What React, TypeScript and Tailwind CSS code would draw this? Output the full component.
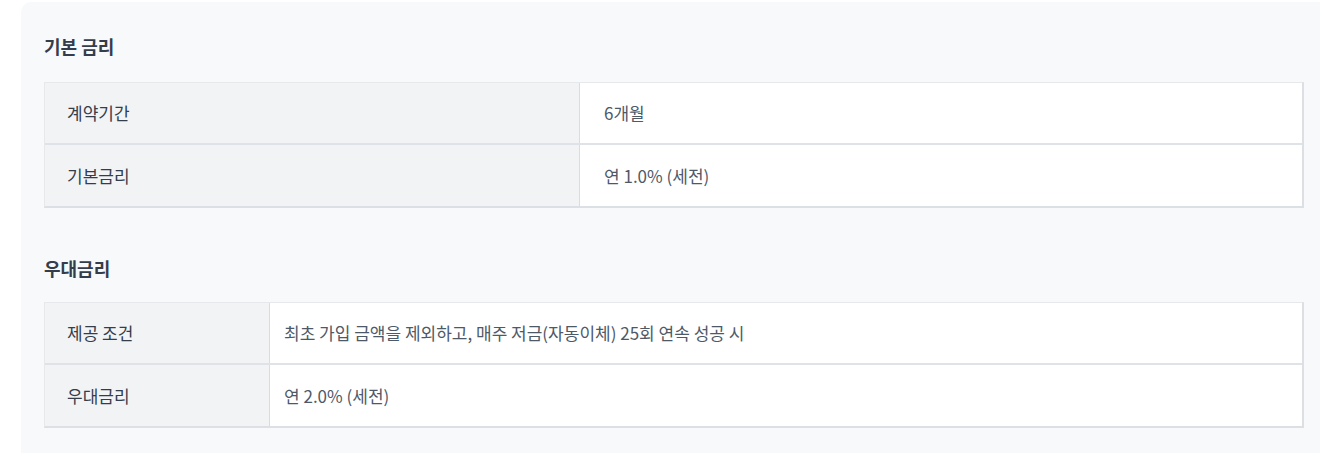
const font = { fontFamily: '"Noto Sans CJK KR", "Noto Sans", sans-serif' };

type Row = { label: string; value: string };

const basicRows: Row[] = [
  { label: "계약기간", value: "6개월" },
  { label: "기본금리", value: "연 1.0% (세전)" },
];

const bonusRows: Row[] = [
  { label: "제공 조건", value: "최초 가입 금액을 제외하고, 매주 저금(자동이체) 25회 연속 성공 시" },
  { label: "우대금리", value: "연 2.0% (세전)" },
];

function RateTable({ rows, labelWidth, valuePad }: { rows: Row[]; labelWidth: string; valuePad: string }) {
  return (
    <div className="border-t border-l border-[#e6e8eb] border-r-2 border-b-2 border-r-[#dcdfe3] border-b-[#dcdfe3]">
      {rows.map((row, i) => (
        <div
          key={row.label}
          className={
            i < rows.length - 1
              ? "flex h-[62px] border-b-2 border-[#dfe2e6]"
              : "flex h-[61px]"
          }
        >
          <div
            className={`${labelWidth} shrink-0 flex items-center pl-[22px] bg-[#f2f3f5] border-r border-[#d9dce0] text-[17px] text-[#333d4b]`}
          >
            {row.label}
          </div>
          <div className={`${valuePad} flex-1 flex items-center bg-white text-[17px] text-[#4e5968]`}>
            {row.value}
          </div>
        </div>
      ))}
    </div>
  );
}

export default function App() {
  return (
    <div className="w-[1320px] h-[453px] overflow-hidden bg-white pt-[2px] pl-[21px]" style={font}>
      <div className="h-[460px] bg-[#f8f9fa] rounded-tl-[10px] pl-[23px] pr-4 pt-[32px]">
        {/* 기본 금리 */}
        <h2 className="text-[18px] leading-[24px] font-bold text-[#333d4b]">기본 금리</h2>
        <div className="mt-[24px] w-[1260px]">
          <RateTable rows={basicRows} labelWidth="w-[535px]" valuePad="pl-6" />
        </div>

        {/* 우대금리 */}
        <h2 className="mt-[48px] text-[18px] leading-[24px] font-bold text-[#333d4b]">우대금리</h2>
        <div className="mt-[22px] w-[1260px]">
          <RateTable rows={bonusRows} labelWidth="w-[225px]" valuePad="pl-[14px]" />
        </div>
      </div>
    </div>
  );
}
